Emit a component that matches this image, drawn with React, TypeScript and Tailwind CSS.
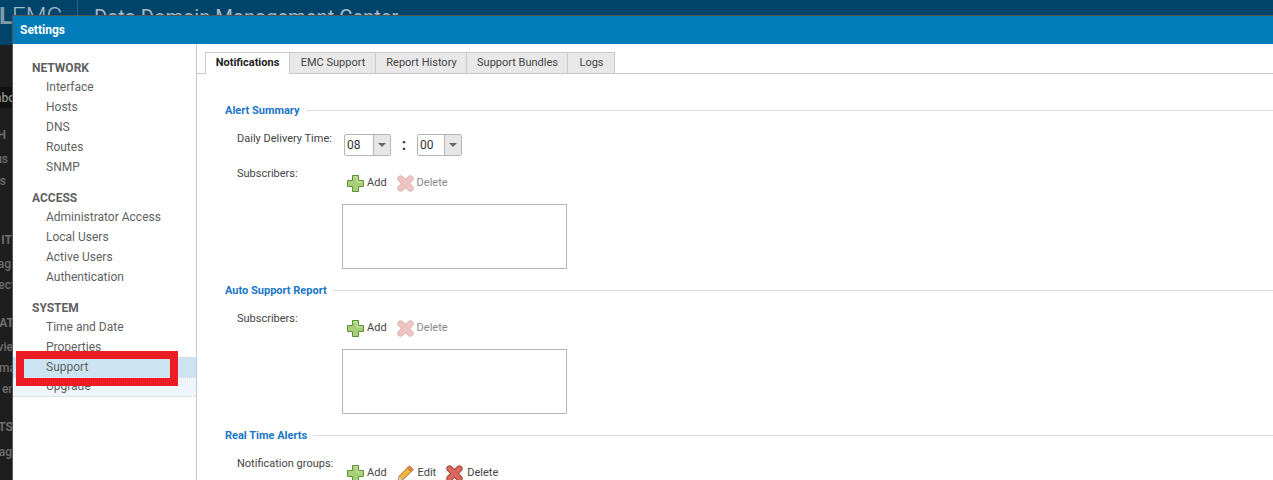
import React from 'react'

const navGroups = [
  { title: 'NETWORK', items: ['Interface', 'Hosts', 'DNS', 'Routes', 'SNMP'] },
  { title: 'ACCESS', items: ['Administrator Access', 'Local Users', 'Active Users', 'Authentication'] },
  { title: 'SYSTEM', items: ['Time and Date', 'Properties', 'Support', 'Upgrade'] },
]

const tabs = [
  { label: 'Notifications', w: 'w-[85px]' },
  { label: 'EMC Support', w: 'w-[86px]' },
  { label: 'Report History', w: 'w-[91px]' },
  { label: 'Support Bundles', w: 'w-[101px]' },
  { label: 'Logs', w: 'w-[47px]' },
]

function PlusIcon() {
  return (
    <svg width="17" height="17" viewBox="0 0 17 17" className="shrink-0">
      <path d="M5.5.5h6v5h5v6h-5v5h-6v-5h-5v-6h5z" fill="#a8cf78" stroke="#5b9438" strokeWidth="1" />
      <path d="M6.5 1.5h4v5h5v1H9.5v-5h-3z" fill="#cfe8ac" />
    </svg>
  )
}

function CrossIcon({ faded = false }: { faded?: boolean }) {
  return (
    <svg width="17" height="17" viewBox="0 0 17 17" className="shrink-0" opacity={faded ? 0.38 : 1}>
      <g stroke="#a8443a" strokeWidth="6.5" strokeLinecap="round">
        <path d="M3.6 3.6l9.8 9.8" />
        <path d="M13.4 3.6l-9.8 9.8" />
      </g>
      <g stroke="#d9695f" strokeWidth="4.6" strokeLinecap="round">
        <path d="M3.6 3.6l9.8 9.8" />
        <path d="M13.4 3.6l-9.8 9.8" />
      </g>
    </svg>
  )
}

function PencilIcon() {
  return (
    <svg width="17" height="17" viewBox="0 0 17 17" className="shrink-0">
      <path d="M12.5.8 16.2 4.5 6 14.7 1 16l1.3-5z" fill="#f3b53f" stroke="#a9702a" strokeWidth="1" strokeLinejoin="round" />
      <path d="M2.3 11 6 14.7 1 16z" fill="#ead6b4" stroke="#a9907a" strokeWidth="0.7" />
      <path d="M10.8 2.6l3.6 3.6" stroke="#b8562c" strokeWidth="1.4" />
      <path d="M12.5.8 16.2 4.5l-1.8 1.7-3.6-3.6z" fill="#e08a5a" />
    </svg>
  )
}

function Action({ icon, label, faded = false, gap = 'mr-[10px]', inner = 'gap-[3px]' }: { icon: React.ReactNode; label: string; faded?: boolean; gap?: string; inner?: string }) {
  return (
    <span className={`flex items-center ${inner} ${gap}`}>
      {icon}
      <span className={faded ? 'text-[#888]' : 'text-[#444]'}>{label}</span>
    </span>
  )
}

function SectionTitle({ title }: { title: string }) {
  return (
    <div className="flex h-[14px] items-center gap-[6px]">
      <span className="whitespace-nowrap text-[11px] font-bold text-[#1a76c8]">{title}</span>
      <div className="mb-[2px] h-px flex-1 bg-[#dcdcdc]" />
    </div>
  )
}

function TimeSelect({ value, w }: { value: string; w: string }) {
  return (
    <div className={`mt-[3px] flex h-[22px] items-stretch rounded-[2px] border border-[#b5b5b5] bg-white ${w}`}>
      <span className="flex-1 pl-[2px] text-[12px] leading-[20px] text-[#333]">{value}</span>
      <span className="flex w-[17px] items-center justify-center border-l border-[#b5b5b5] bg-[#e6e6e6]">
        <span className="h-0 w-0 border-x-[4px] border-t-[4px] border-x-transparent border-t-[#666]" />
      </span>
    </div>
  )
}

function Subscribers({ top }: { top: string }) {
  return (
    <div className={`ml-[12px] flex ${top}`}>
      <span className="w-[105px] shrink-0 leading-[14px] text-[#444]">Subscribers:</span>
      <div>
        <div className="ml-[5px] mt-[8px] flex h-[17px] items-center">
          <Action icon={<PlusIcon />} label="Add" />
          <Action icon={<CrossIcon faded />} label="Delete" faded />
        </div>
        <div className="mt-[12px] h-[65px] w-[225px] border border-[#b5b5b5] bg-white" />
      </div>
    </div>
  )
}

export default function App() {
  return (
    <div className="relative h-[480px] w-full overflow-hidden bg-[#1e1e1e] font-['Roboto',sans-serif]">
      {/* page behind the dialog */}
      <div className="flex h-[45px] items-start bg-[#00446a]">
        <div className="flex h-[45px] w-[78px] justify-end border-r border-[#2b6283] pr-[15px] pt-[4px] text-[24px] leading-[24px] text-[#a8bbc8]">
          <span className="font-bold text-[#8499a8]">L</span>
          <span className="font-light">EMC</span>
        </div>
        <span className="ml-[16px] pt-[5px] text-[20.2px] leading-[24px] text-[#a8bbc8]">Data Domain Management Center</span>
      </div>

      <div className="flex w-[12px] flex-col items-end overflow-hidden text-[12px] font-medium leading-[14px] text-[#6e6e6e]">
        <div className="mt-[42px] flex h-[21px] w-full items-center justify-end bg-[#111] text-[#8f8f8f]"><span className="-mr-[3px] whitespace-nowrap">Dashbo</span></div>
        <span className="mr-[6px] mt-[20px] whitespace-nowrap font-bold">H</span>
        <span className="mr-[4px] mt-[10px] whitespace-nowrap">us</span>
        <span className="mr-[6px] mt-[8px] whitespace-nowrap">s</span>
        <span className="mt-[45px] whitespace-nowrap font-bold">IT</span>
        <span className="mr-[1px] mt-[10px] whitespace-nowrap">ag</span>
        <span className="-mr-[3px] mt-[7px] whitespace-nowrap">ect</span>
        <span className="-mr-[2px] mt-[24px] whitespace-nowrap font-bold">CAT</span>
        <span className="-mr-[1px] mt-[10px] whitespace-nowrap">vie</span>
        <span className="-mr-[4px] mt-[7px] whitespace-nowrap">ma</span>
        <span className="-mr-[3px] mt-[7px] whitespace-nowrap">en</span>
        <span className="-mr-[1px] mt-[24px] whitespace-nowrap font-bold">TS</span>
        <span className="mt-[11px] whitespace-nowrap">ag</span>
      </div>

      {/* Settings dialog */}
      <div className="absolute bottom-0 left-[12px] right-0 top-[15px] flex flex-col border-l border-t border-[#555] bg-white">
        <div className="flex h-[28px] shrink-0 items-center bg-[#007db8] pl-[7px] text-[12px] font-bold text-white">Settings</div>
        <div className="flex min-h-0 flex-1">
          <aside className="w-[184px] shrink-0 border-r border-[#c8c8c8] pt-[13px] text-[12px] text-[#5f5f5f]">
            {navGroups.map((g) => (
              <div key={g.title} className="mb-[10px]">
                <div className="h-[20px] pl-[19px] font-bold leading-[22px]">{g.title}</div>
                {g.items.map((item) => (
                  <div
                    key={item}
                    className={`h-[20px] pl-[33px] ${item === 'Support' ? 'bg-[#cce4f2]' : ''} ${item === 'Upgrade' ? 'border-y border-dotted border-[#c8d4dc] bg-[#eef6fc] leading-[17px]' : 'leading-[20px]'}`}
                  >
                    {item}
                  </div>
                ))}
              </div>
            ))}
          </aside>

          <main className="min-w-0 flex-1 text-[11px]">
            <div className="flex h-[30px] items-end border-b border-[#c8c8c8] pl-[8px]">
              {tabs.map((t, i) => (
                <div
                  key={t.label}
                  className={`flex shrink-0 items-center justify-center border-r border-t border-[#c8c8c8] ${t.w} ${i === 0 ? '-mb-px h-[22px] border-l bg-white pb-px font-bold text-[#222]' : 'h-[21px] bg-[#e8e8e8] pl-[1px] text-[#444]'}`}
                >
                  {t.label}
                </div>
              ))}
            </div>

            <div className="pl-[28px]">
              <div className="mt-[30px]"><SectionTitle title="Alert Summary" /></div>
              <div className="ml-[12px] mt-[13px] flex items-start">
                <span className="w-[107px] shrink-0 leading-[16px] text-[#444]">Daily Delivery Time:</span>
                <TimeSelect value="08" w="w-[47px]" />
                <span className="mt-[3px] w-[26px] text-center text-[16px] font-bold leading-[22px] text-[#333]">:</span>
                <TimeSelect value="00" w="w-[45px]" />
              </div>
              <Subscribers top="mt-[11px]" />

              <div className="mt-[15px]"><SectionTitle title="Auto Support Report" /></div>
              <Subscribers top="mt-[14px]" />

              <div className="mt-[15px]"><SectionTitle title="Real Time Alerts" /></div>
              <div className="ml-[12px] mt-[14px] flex">
                <span className="w-[105px] shrink-0 leading-[14px] text-[#444]">Notification groups:</span>
                <div className="ml-[5px] mt-[8px] flex h-[17px] items-center">
                  <Action icon={<PlusIcon />} label="Add" />
                  <Action icon={<PencilIcon />} label="Edit" gap="mr-[10px]" inner="gap-[4px]" />
                  <Action icon={<CrossIcon />} label="Delete" inner="gap-[4px]" />
                </div>
              </div>
            </div>
          </main>
        </div>
      </div>

      {/* red annotation drawn over the screenshot */}
      <div className="absolute left-[16px] top-[351px] h-[35px] w-[162px] border-[8px] border-[#ed1c24]" />
    </div>
  )
}
